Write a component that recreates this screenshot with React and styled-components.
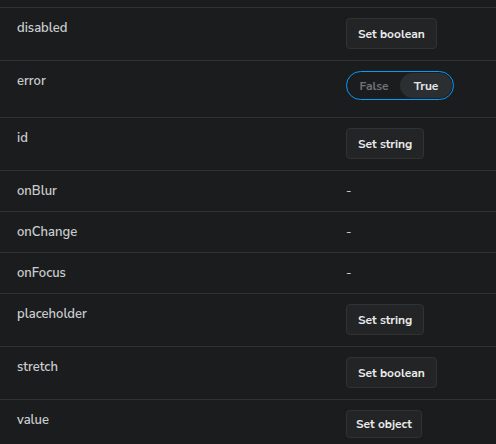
import React from "react"
import styled, { createGlobalStyle } from "styled-components"

const GlobalStyle = createGlobalStyle`
  html, body {
    margin: 0;
    padding: 0;
    background: #1b1c1d;
  }
  body {
    font-family: "Nunito Sans", "Noto Sans", "Open Sans", sans-serif;
  }
`

const Table = styled.div`
  width: 496px;
  height: 444px;
  overflow: hidden;
  background: #1b1c1d;
  padding-top: 7px;
  box-sizing: border-box;
`

const Row = styled.div`
  display: grid;
  grid-template-columns: 346px 1fr;
  align-items: start;
  height: ${p => p.$h}px;
  box-sizing: border-box;
  border-top: 1px solid #303233;
`

const Name = styled.div`
  padding: 10px 0 0 17px;
  line-height: 20px;
  font-size: 13px;
  font-weight: 600;
  color: #c9ccce;
`

const Control = styled.div`
  padding-top: ${p => p.$top}px;
  display: flex;
`

const Dash = styled.span`
  line-height: 20px;
  font-size: 13px;
  color: #c9ccce;
`

const Button = styled.button`
  height: ${p => p.$h || 31}px;
  padding: 0 ${p => p.$pad || 11}px;
  border: 1px solid #303233;
  border-radius: 4px;
  background: #222425;
  color: #e9eaeb;
  font-family: inherit;
  font-size: 12px;
  font-weight: 700;
  cursor: pointer;
`

const Toggle = styled.div`
  display: flex;
  align-items: center;
  width: 108px;
  height: 29px;
  box-sizing: border-box;
  border: 1px solid #029cfd;
  border-radius: 15px;
  padding: 1px;
  background: #1b1c1d;
`

const Segment = styled.span`
  flex: 1;
  height: 100%;
  display: flex;
  align-items: center;
  justify-content: center;
  border-radius: 14px;
  font-size: 12px;
  font-weight: 700;
  color: ${p => (p.$active ? "#e4e6e8" : "#6e7275")};
  background: ${p => (p.$active ? "#2b2f32" : "transparent")};
`

const rows = [
  { name: "disabled", h: 53, kind: "button", label: "Set boolean" },
  { name: "error", h: 57, kind: "toggle" },
  { name: "id", h: 53, kind: "button", label: "Set string" },
  { name: "onBlur", h: 41, kind: "dash" },
  { name: "onChange", h: 41, kind: "dash" },
  { name: "onFocus", h: 41, kind: "dash" },
  { name: "placeholder", h: 53, kind: "button", label: "Set string" },
  { name: "stretch", h: 53, kind: "button", label: "Set boolean" },
  { name: "value", h: 53, kind: "small", label: "Set object" },
]

const renderControl = r => {
  if (r.kind === "dash") {
    return (
      <Control $top={10}>
        <Dash>-</Dash>
      </Control>
    )
  }
  if (r.kind === "toggle") {
    return (
      <Control $top={10}>
        <Toggle>
          <Segment>False</Segment>
          <Segment $active>True</Segment>
        </Toggle>
      </Control>
    )
  }
  if (r.kind === "small") {
    return (
      <Control $top={10}>
        <Button $h={28} $pad={9}>{r.label}</Button>
      </Control>
    )
  }
  return (
    <Control $top={10}>
      <Button>{r.label}</Button>
    </Control>
  )
}

const App = () => {
  return (
    <Table>
      <GlobalStyle />
      {rows.map(r => (
        <Row key={r.name} $h={r.h}>
          <Name>{r.name}</Name>
          {renderControl(r)}
        </Row>
      ))}
    </Table>
  )
}

export default App
